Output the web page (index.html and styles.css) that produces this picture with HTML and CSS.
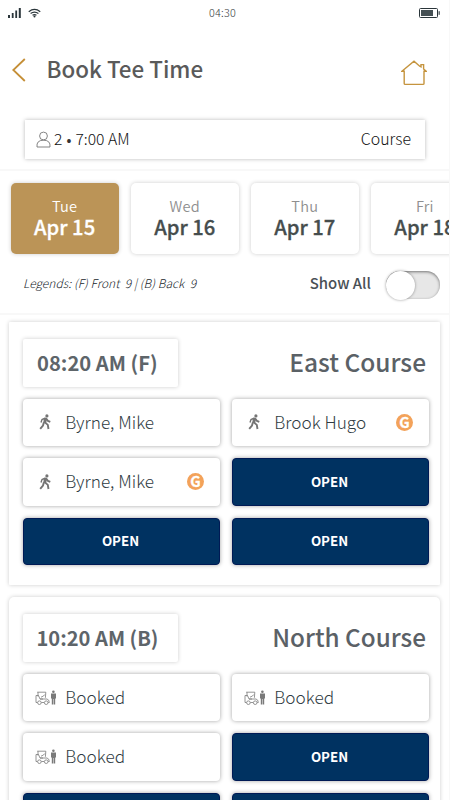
FILE: index.html
```html
<!DOCTYPE html>
<html lang="en">
<head>
<meta charset="utf-8">
<title>Book Tee Time</title>
<link rel="stylesheet" href="styles.css">
</head>
<body>
<svg class="defs" width="0" height="0">
  <symbol id="walk" viewBox="0 0 12 16">
    <circle cx="7.9" cy="1.9" r="1.6"/>
    <path d="M6.6 4 L3 5.6 L2 8.5" fill="none" stroke="currentColor" stroke-width="1.4"/>
    <path d="M5 4 L8 3.8 L7.9 6 L7 9.2 L4.2 8.8 Z"/>
    <path d="M7.4 4.8 L9 7 L11.3 7.9 M6 8.4 L8.8 10.9 L9.5 15 M4.9 8.2 L4 11.5 L1.2 14.9" fill="none" stroke="currentColor" stroke-width="1.9"/>
  </symbol>
  <symbol id="cart" viewBox="0 0 22 16">
    <g fill="none" stroke="currentColor" stroke-width=".8">
      <path d="M2.2 2.2 H10.8 L10.4 7.8 M3 2.2 V6.5 M2.4 12.5 H1 V5.5 H3.5 L5 9 H8 M5 9 H12 Q14.2 9.5 14.3 12.5 H13.2 M6.4 12.5 H9 M6 7.2 L8.5 6 L9.8 4.5"/>
      <circle cx="4.4" cy="12.7" r="1.8"/><circle cx="11.2" cy="12.7" r="1.8"/>
    </g>
    <circle cx="18.4" cy="1.8" r="1.3"/>
    <path d="M16 3.5 H21 V8.5 H20.2 V14.5 H18.7 V9 H18.2 V14.5 H16.8 V8.5 H16 Z"/>
  </symbol>
</svg>
<main class="screen">
  <div class="status">
    <div class="signals">
      <svg class="bars" viewBox="0 0 13 10"><path d="M0 7h2V10H0zM3.8 5h1.8V10H3.8zM7.3 2.6h1.8V10H7.3zM10.8 0h2v10h-2z"/></svg>
      <svg class="wifi" viewBox="0 0 14 10"><path d="M.8 3.6 Q7 -1.4 13.2 3.6 M2.8 5.6 Q7 2.4 11.2 5.6 M4.9 7.4 Q7 5.9 9.1 7.4" fill="none" stroke="#2a353a" stroke-width="1.3"/><circle cx="7" cy="8.7" r="1.1"/></svg>
    </div>
    <time class="clock">04:30</time>
    <svg class="battery" viewBox="0 0 21 10"><rect x=".5" y=".5" width="18" height="9" rx="1" fill="none" stroke="#2a353a"/><rect x="2" y="2" width="12" height="6" fill="#455054"/><rect x="19.6" y="3.2" width="1.1" height="3.6"/></svg>
  </div>

  <header class="header">
    <svg class="back" viewBox="0 0 14 24"><path d="M12.8 1 L1.3 12 L12.8 23"/></svg>
    <h1 class="title">Book Tee Time</h1>
    <svg class="home" viewBox="0 0 26 26"><path d="M.9 11.2 L13 1.2 L18.7 6.2 L20 6.8 V4.6 H22.6 V8.9 L25.1 11.2 H23 V23.4 Q23 24.4 22 24.4 H4.2 Q3.2 24.4 3.2 23.4 V11.2 Z"/></svg>
  </header>

  <div class="search">
    <svg class="person" viewBox="0 0 15 17"><circle cx="7.5" cy="5" r="3.9"/><path d="M1 16 Q.2 9.2 7.5 9.2 Q14.8 9.2 14 16 Z"/></svg>
    <span class="count">2</span><span class="dot">•</span><span class="when">7:00 AM</span>
    <span class="course">Course</span>
  </div>

  <section class="filters">
    <div class="days">
      <div class="day active"><span>Tue</span><b>Apr 15</b></div>
      <div class="day"><span>Wed</span><b>Apr 16</b></div>
      <div class="day"><span>Thu</span><b>Apr 17</b></div>
      <div class="day"><span>Fri</span><b>Apr 18</b></div>
    </div>
    <div class="options">
      <span class="legend">Legends: (F) Front&nbsp; 9 | (B) Back&nbsp; 9</span>
      <span class="show">Show All</span>
      <span class="toggle"><i></i></span>
    </div>
  </section>

  <section class="card">
    <div class="card-head"><div class="slot">08:20 AM (F)</div><h2>East Course</h2></div>
    <div class="grid">
      <div class="tile"><svg class="walk"><use href="#walk"/></svg><span>Byrne, Mike</span></div>
      <div class="tile"><svg class="walk"><use href="#walk"/></svg><span>Brook Hugo</span><em>G</em></div>
      <div class="tile"><svg class="walk"><use href="#walk"/></svg><span>Byrne, Mike</span><em>G</em></div>
      <div class="open">OPEN</div>
      <div class="open">OPEN</div>
      <div class="open">OPEN</div>
    </div>
  </section>

  <section class="card rounded">
    <div class="card-head"><div class="slot">10:20 AM (B)</div><h2>North Course</h2></div>
    <div class="grid">
      <div class="tile booked"><svg class="cart"><use href="#cart"/></svg><span>Booked</span></div>
      <div class="tile booked"><svg class="cart"><use href="#cart"/></svg><span>Booked</span></div>
      <div class="tile booked"><svg class="cart"><use href="#cart"/></svg><span>Booked</span></div>
      <div class="open">OPEN</div>
      <div class="open"></div>
      <div class="open"></div>
    </div>
  </section>
</main>
</body>
</html>
```

FILE: styles.css
```css
* { box-sizing: border-box; }
body { margin: 0; background: #fff; font-family: "Noto Sans CJK SC", "Open Sans", sans-serif; }
.defs { display: block; position: absolute; }
.screen { width: 450px; height: 800px; overflow: hidden; background: #fff; border-right: 1px solid #f8f8f8; }
.screen svg { display: block; flex: none; }

.status { height: 26px; padding: 0 9px 0 8px; display: grid; grid-template-columns: 1fr auto 1fr; align-items: center; fill: #2a353a; }
.signals { display: flex; gap: 7px; }
.bars { width: 13px; height: 10px; }
.wifi { width: 13px; height: 10px; }
.clock { margin: -3px 3px 0 0; font-size: 10.8px; line-height: 14px; color: #34393c; font-weight: 300; letter-spacing: .25px; }
.battery { width: 21px; height: 10px; justify-self: end; }

.header { height: 94px; padding: 31px 22px 0 12px; display: flex; align-items: flex-start; }
.back { width: 14px; height: 24px; margin-top: 1px; fill: none; stroke: #c58f37; stroke-width: 1.8; }
.title { margin: -5px 0 0 20.5px; font-size: 22.4px; line-height: 32px; font-weight: 500; color: #5a5a5a; }
.home { width: 26px; height: 26px; margin: 3px 0 0 auto; fill: none; stroke: #c5943e; stroke-width: 1.4; }

.search { height: 39px; margin: 0 24px 0 25px; padding: 0 14px 0 11px; display: flex; align-items: center; background: #fff; box-shadow: 0 0 4px rgba(0,0,0,.28); font-size: 15.7px; line-height: 36px; font-weight: 300; color: #111; }
.search span { margin-top: -1px; }
.person { width: 15px; height: 17px; margin-right: 3px; fill: none; stroke: #777; stroke-width: .9; }
.search .dot { width: 13px; text-align: center; font: 700 13px/36px "Open Sans", sans-serif; color: #333; margin-top: 2px; }
.search .course { margin-left: auto; font-size: 15.9px; }

.filters { height: 146px; margin-top: 10px; padding-top: 12px; border-top: 2px solid #f8f8f8; border-bottom: 2px solid #f8f8f8; }
.days { display: flex; gap: 12.1px; padding-left: 10.6px; overflow: visible; }
.day { flex: none; width: 108px; height: 71px; border-radius: 5px; display: flex; flex-direction: column; align-items: center; padding-top: 12px; background: #fff; box-shadow: 0 0 4px rgba(0,0,0,.2); }
.day span { font-size: 14.6px; line-height: 21px; color: #8f8f8f; font-weight: 350; letter-spacing: .2px; }
.day b { font-size: 20.2px; line-height: 22px; font-weight: 500; color: #454d4d; -webkit-text-stroke: .3px currentColor; }
.day.active { background: #bb9457; }
.day.active span, .day.active b { color: #fff; }
.options { height: 60px; display: flex; align-items: center; padding: 0 9px 0 23px; }
.legend { margin-top: -2px; font-size: 11.9px; line-height: 18px; letter-spacing: .07px; font-style: italic; font-weight: 300; color: #20262c; }
.show { margin: -3px 0 0 auto; font-size: 14.9px; line-height: 20px; font-weight: 500; color: #495056; }
.toggle { width: 54px; height: 28px; margin: 1px 0 0 15px; border-radius: 14px; background: #e7e7e7; box-shadow: inset 0 1px 3px rgba(0,0,0,.5); }
.toggle i { display: block; width: 29px; height: 29px; border-radius: 50%; background: #fff; box-shadow: 0 0 3px rgba(0,0,0,.4); }

.card { width: 431px; height: 263px; margin: 7px 0 0 9px; padding: 16.5px 10px 0 14px; background: #fff; box-shadow: 0 0 4px rgba(0,0,0,.2); border-radius: 1px; }
.card.rounded { margin-top: 12px; border-radius: 5px; }
.card-head { display: flex; align-items: center; justify-content: space-between; padding-right: 4px; }
.slot { width: 155px; height: 48px; padding-left: 14px; border-radius: 2px; box-shadow: 0 0 4px rgba(0,0,0,.2); font-size: 20.2px; line-height: 48px; font-weight: 700; color: #5e656a; }
.rounded .slot { padding-left: 13.5px; font-size: 20.1px; }
h2 { margin: -1px 0 0; font-size: 24.5px; line-height: 48px; font-weight: 500; color: #5b6166; }
.rounded h2 { font-size: 24.3px; }
.grid { display: grid; grid-template-columns: 197px 197px; gap: 12px; margin-top: 12px; grid-auto-rows: 47.5px; }
.tile, .open { border-radius: 4px; box-shadow: 0 0 4px rgba(0,0,0,.36); }
.tile { display: flex; align-items: center; padding: 0 16px 0 16px; background: #fff; color: #2f3b42; font-size: 17.2px; line-height: 44px; font-weight: 300; }
.tile span { margin-top: -1px; }
.walk { width: 12px; height: 16px; margin-right: 14.3px; color: #757575; fill: #757575; }
.tile.booked { padding-left: 12px; }
.cart { width: 22px; height: 16px; margin: 1px 8.3px 0 0; color: #7a7a7a; fill: #7a7a7a; }
.tile em { width: 17px; height: 17px; margin-left: auto; border-radius: 50%; background: #f3a25a; color: #fff; font: 700 14.5px/16px "Noto Sans CJK SC", sans-serif; text-align: center; -webkit-text-stroke: .3px #fff; }
.open { display: flex; align-items: center; justify-content: center; padding: 0 2px 0 0; background: #003261; border: 1px solid #001a55; color: #fff; font-size: 13.3px; line-height: 20px; font-weight: 700; }
```
